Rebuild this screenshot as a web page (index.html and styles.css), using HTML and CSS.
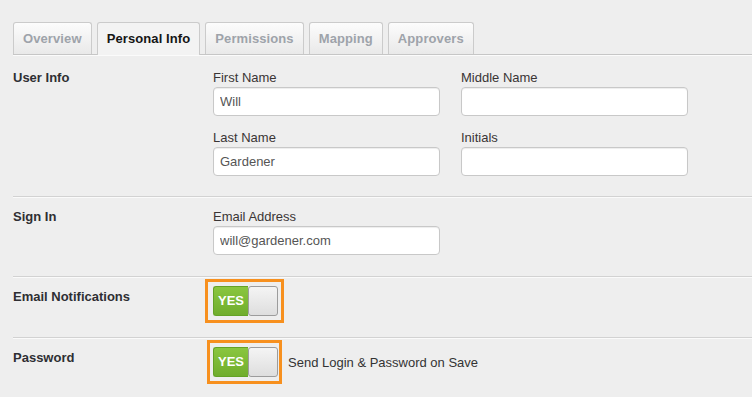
FILE: index.html
```html
<!DOCTYPE html>
<html lang="en">

<head>
    <meta charset="UTF-8">
    <meta name="viewport" content="width=device-width, initial-scale=1.0">
    <title>Personal Info</title>
    <link rel="stylesheet" href="styles.css">
</head>

<body>
    <div class="page">
        <ul class="tabs">
            <li class="tab">Overview</li>
            <li class="tab active">Personal Info</li>
            <li class="tab">Permissions</li>
            <li class="tab">Mapping</li>
            <li class="tab">Approvers</li>
        </ul>

        <div class="section first">
            <div class="sectionLabel">User Info</div>
            <div class="fields">
                <div class="field">
                    <label>First Name</label>
                    <input type="text" value="Will">
                </div>
                <div class="field">
                    <label>Middle Name</label>
                    <input type="text" value="">
                </div>
                <div class="field">
                    <label>Last Name</label>
                    <input type="text" value="Gardener">
                </div>
                <div class="field">
                    <label>Initials</label>
                    <input type="text" value="">
                </div>
            </div>
        </div>

        <div class="section">
            <div class="sectionLabel">Sign In</div>
            <div class="fields">
                <div class="field">
                    <label>Email Address</label>
                    <input type="text" value="will@gardener.com">
                </div>
            </div>
        </div>

        <div class="section">
            <div class="sectionLabel">Email Notifications</div>
            <div class="switchGroup">
                <div class="switch">
                    <span class="switchOn">YES</span>
                    <span class="switchKnob"></span>
                    <span class="highlight"></span>
                </div>
            </div>
        </div>

        <div class="section">
            <div class="sectionLabel">Password</div>
            <div class="switchGroup">
                <div class="switch">
                    <span class="switchOn">YES</span>
                    <span class="switchKnob"></span>
                    <span class="highlight narrow"></span>
                </div>
                <span class="switchText">Send Login &amp; Password on Save</span>
            </div>
        </div>
    </div>
</body>

</html>
```

FILE: styles.css
```css
* {
    box-sizing: border-box;
}

body {
    margin: 0;
    padding: 0;
    background: #eeeeee;
    font-family: "Liberation Sans", Arial, sans-serif;
    font-size: 13px;
    color: #333;
}

.page {
    padding: 22px 0 0 13px;
    border-top: 1px solid #f8f8f8;
    margin-top: -1px;
}

.tabs {
    display: flex;
    align-items: flex-start;
    gap: 5px;
    margin: 0;
    padding: 0;
    list-style: none;
    border-bottom: 1px solid #c6c6c6;
    box-shadow: 0 1px 0 #fbfbfb;
}

.tab {
    height: 32px;
    line-height: 31px;
    padding: 0 9px;
    border: 1px solid #cbcbcb;
    border-bottom: none;
    border-radius: 3px 3px 0 0;
    background: linear-gradient(#fcfcfc, #e9e9e9);
    font-weight: bold;
    letter-spacing: 0.1px;
    color: #9ea3aa;
}

.tab.active {
    height: 33px;
    margin-bottom: -1px;
    background: #f3f3f3;
    color: #151515;
}

.section {
    display: flex;
    align-items: flex-start;
    padding: 11px 0 21px;
    border-top: 1px solid #d2d2d2;
    box-shadow: inset 0 1px 0 #fafafa;
}

.section.first {
    padding: 14px 0 20px;
    border-top: none;
    box-shadow: none;
}

.sectionLabel {
    width: 200px;
    flex: none;
    font-weight: bold;
    line-height: 17px;
    color: #2e2e33;
}

.fields {
    display: grid;
    grid-template-columns: 227px 227px;
    column-gap: 21px;
    row-gap: 13px;
}

.field label {
    display: block;
    line-height: 17px;
    margin-bottom: 1px;
    color: #3a3535;
}

.field input {
    display: block;
    width: 227px;
    height: 29px;
    padding: 0 6px;
    border: 1px solid #c8c8c8;
    border-radius: 4px;
    background: #fff;
    box-shadow: inset 0 1px 1px rgba(0, 0, 0, 0.075);
    font-family: "Liberation Sans", Arial, sans-serif;
    font-size: 13px;
    color: #555;
    outline: none;
}

.switchGroup {
    display: flex;
    align-items: center;
    gap: 10px;
    margin-top: -2px;
}

.switch {
    position: relative;
    display: flex;
    width: 65px;
    height: 30px;
}

.switchOn {
    width: 35px;
    flex: none;
    border: 1px solid #64a226;
    border-right: none;
    border-radius: 3px 0 0 3px;
    background: linear-gradient(#8ac63f, #70ad2d);
    color: #fff;
    font-weight: bold;
    text-align: center;
    line-height: 28px;
}

.switchKnob {
    flex: 1;
    border: 1px solid #9c9c9c;
    border-radius: 3px;
    background: linear-gradient(#f4f4f4, #dedede);
}

.highlight {
    position: absolute;
    top: -7px;
    bottom: -7px;
    left: -8px;
    right: -6px;
    border: 3px solid #f7901e;
}

.highlight.narrow {
    left: -6px;
    right: -4px;
}

.switchText {
    color: #333;
}
```
